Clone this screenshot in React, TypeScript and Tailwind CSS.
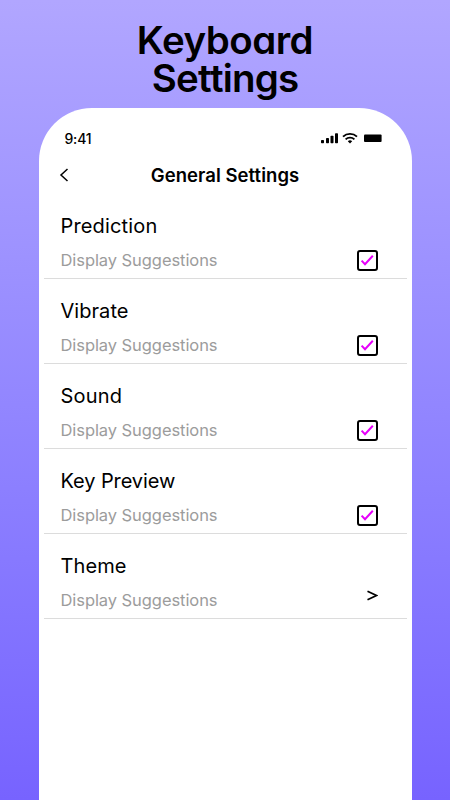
interface SettingRowProps {
    title: string,
    titleClass: string,
    checkable: boolean
}

const settings: SettingRowProps[] = [
    { title: 'Prediction', titleClass: 'tracking-[0.15px]', checkable: true },
    { title: 'Vibrate', titleClass: 'tracking-[0.05px]', checkable: true },
    { title: 'Sound', titleClass: 'tracking-[0.2px]', checkable: true },
    { title: 'Key Preview', titleClass: 'tracking-[-0.1px]', checkable: true },
    { title: 'Theme', titleClass: 'tracking-[0.1px]', checkable: false },
]

function StatusIcons() {
    return (
        <svg width="62" height="12" viewBox="0 0 62 12">
            <rect x="0" y="8" width="3" height="3.3" rx="0.7"/>
            <rect x="5" y="6" width="3" height="5.3" rx="0.7"/>
            <rect x="9.5" y="3.7" width="3" height="7.6" rx="0.7"/>
            <rect x="14" y="1.2" width="3" height="10.1" rx="0.7"/>
            <g fill="none" stroke="black" strokeWidth="1.9">
                <path d="M22 4.6a10.3 10.3 0 0 1 14 0"/>
                <path d="M24.6 7.4a6.4 6.4 0 0 1 8.8 0"/>
            </g>
            <path d="M26.8 9.2a3.2 3.2 0 0 1 4.4 0L29 11.6z"/>
            <rect x="43" y="2.6" width="17.6" height="7.4" rx="1"/>
        </svg>
    )
}

function CheckedBox() {
    return (
        <div
            className="flex h-[21px] w-[21px] items-center justify-center rounded-[3px] border-2 border-black"
        >
            <svg width="17" height="17" viewBox="0 0 17 17" fill="none">
                <path d="M2.6 8.6 6 12.2 13.8 3.8" stroke="#e600fa" strokeWidth="2"/>
            </svg>
        </div>
    )
}

function SettingRow(props: SettingRowProps) {
    return (
        <div className="mx-[5px] flex h-[85px] justify-between border-b border-[#dcdcdc] pl-[17px]">
            <div className="flex flex-col">
                <p className={`mt-[20px] text-[20px] leading-6 text-black ${props.titleClass}`}>
                    {props.title}
                </p>
                <p className="mt-[12px] text-[16.5px] leading-5 tracking-[-0.07px] text-[#9c9c9c]">
                    Display Suggestions
                </p>
            </div>

            <div className="flex w-[50px] flex-col justify-end pb-[7px]">
                {props.checkable ? (
                    <CheckedBox/>
                ) : (
                    <svg width="21" height="24" viewBox="0 0 21 24" fill="none">
                        <path d="M10.5 4.3 19.5 8.5 10.5 12.7" stroke="black" strokeWidth="1.8"/>
                    </svg>
                )}
            </div>
        </div>
    )
}

export default function App() {
    return (
        <div
            className="flex h-[800px] w-[450px] flex-col items-center overflow-hidden bg-linear-to-b from-[#b1a6ff] to-[#7763ff] font-['Inter','Liberation_Sans',sans-serif]"
        >
            <h1
                className="mt-[21px] h-[87px] text-center text-[38.5px] leading-[38px] font-semibold tracking-[-0.5px] text-black [font-feature-settings:'cv11','ss03']"
            >
                Keyboard
                <br/>
                <span className="tracking-[-0.8px]">
                    Se<span className="tracking-[-1.6px]">t</span>tings
                </span>
            </h1>

            <main className="flex w-[373px] grow flex-col rounded-t-[53px] bg-white">
                <div className="flex h-[50px] items-end justify-between pr-[29px] pl-[26px]">
                    <p className="mb-[9px] text-[14px] leading-5 font-medium tracking-[-0.2px]">
                        9:41
                    </p>
                    <div className="mb-[14px]">
                        <StatusIcons/>
                    </div>
                </div>

                <div className="flex h-[36px] items-start pt-[5px]">
                    <button className="mt-[5px] ml-[20px] w-[12px]" aria-label="Back">
                        <svg width="10" height="14" viewBox="0 0 10 14" fill="none">
                            <path d="M8.5 1 2 7 8.5 13" stroke="black" strokeWidth="1.5"/>
                        </svg>
                    </button>
                    <h2 className="grow pr-[32px] text-center text-[18.5px] leading-6 font-semibold tracking-[0.05px]">
                        General Settings
                    </h2>
                </div>

                <section className="flex flex-col">
                    {settings.map((setting) => (
                        <SettingRow key={setting.title} {...setting}/>
                    ))}
                </section>
            </main>
        </div>
    )
}
